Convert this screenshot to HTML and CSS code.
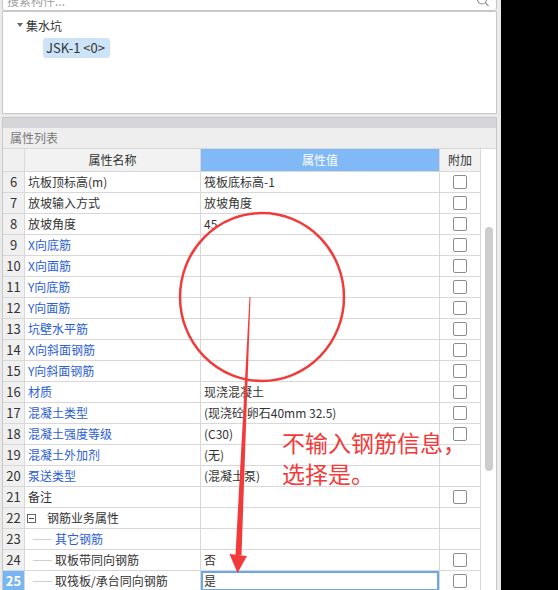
FILE: index.html
```html
<!DOCTYPE html>
<html lang="zh-CN">
<head>
<meta charset="utf-8">
<title>属性列表</title>
<link rel="stylesheet" href="styles.css">
</head>
<body>
<div class="app">
  <div class="search-clip">
    <div class="search">
      <span class="ph">搜索构件...</span>
      <svg class="mag" width="14" height="14" viewBox="0 0 14 14"><circle cx="6" cy="6.5" r="4.5" fill="none" stroke="#9a9a9a" stroke-width="1.2"/><line x1="9.3" y1="9.8" x2="12.5" y2="13" stroke="#9a9a9a" stroke-width="1.3"/></svg>
    </div>
  </div>
  <div class="tree">
    <div class="node"><span class="caret"></span>集水坑</div>
    <div class="leaf"><span class="chip">JSK-1 &lt;0&gt;</span></div>
  </div>
  <div class="props">
    <div class="bar"></div>
    <div class="title">属性列表</div>
    <div class="grid-wrap">
      <div class="grid">
        <div class="c h num"></div><div class="c h">属性名称</div><div class="c h hv">属性值</div><div class="c h">附加</div>

        <div class="c num">6</div><div class="c name">坑板顶标高(m)</div><div class="c val">筏板底标高-1</div><div class="c add"><span class="cb"></span></div>
        <div class="c num">7</div><div class="c name">放坡输入方式</div><div class="c val">放坡角度</div><div class="c add"><span class="cb"></span></div>
        <div class="c num">8</div><div class="c name">放坡角度</div><div class="c val">45</div><div class="c add"><span class="cb"></span></div>
        <div class="c num">9</div><div class="c name blue">X向底筋</div><div class="c val"></div><div class="c add"><span class="cb"></span></div>
        <div class="c num">10</div><div class="c name blue">X向面筋</div><div class="c val"></div><div class="c add"><span class="cb"></span></div>
        <div class="c num">11</div><div class="c name blue">Y向底筋</div><div class="c val"></div><div class="c add"><span class="cb"></span></div>
        <div class="c num">12</div><div class="c name blue">Y向面筋</div><div class="c val"></div><div class="c add"><span class="cb"></span></div>
        <div class="c num">13</div><div class="c name blue">坑壁水平筋</div><div class="c val"></div><div class="c add"><span class="cb"></span></div>
        <div class="c num">14</div><div class="c name blue">X向斜面钢筋</div><div class="c val"></div><div class="c add"><span class="cb"></span></div>
        <div class="c num">15</div><div class="c name blue">Y向斜面钢筋</div><div class="c val"></div><div class="c add"><span class="cb"></span></div>
        <div class="c num">16</div><div class="c name blue">材质</div><div class="c val">现浇混凝土</div><div class="c add"><span class="cb"></span></div>
        <div class="c num">17</div><div class="c name blue">混凝土类型</div><div class="c val">(现浇砼 卵石40mm 32.5)</div><div class="c add"><span class="cb"></span></div>
        <div class="c num">18</div><div class="c name blue">混凝土强度等级</div><div class="c val">(C30)</div><div class="c add"><span class="cb"></span></div>
        <div class="c num">19</div><div class="c name blue">混凝土外加剂</div><div class="c val">(无)</div><div class="c add"></div>
        <div class="c num">20</div><div class="c name blue">泵送类型</div><div class="c val">(混凝土泵)</div><div class="c add"></div>
        <div class="c num">21</div><div class="c name">备注</div><div class="c val"></div><div class="c add"><span class="cb"></span></div>
        <div class="c num">22</div><div class="c name grp"><span class="tog"></span>钢筋业务属性</div><div class="c val"></div><div class="c add"></div>
        <div class="c num">23</div><div class="c name sub blue"><span class="branch"></span>其它钢筋</div><div class="c val"></div><div class="c add"></div>
        <div class="c num">24</div><div class="c name sub"><span class="branch"></span>取板带同向钢筋</div><div class="c val">否</div><div class="c add"><span class="cb"></span></div>
        <div class="c num selnum">25</div><div class="c name sub"><span class="branch"></span>取筏板/承台同向钢筋</div><div class="c val selval">是</div><div class="c add"><span class="cb"></span></div>
      </div>
      <div class="vscroll"><div class="thumb"></div></div>
    </div>
  </div>
  <svg class="annot" width="501" height="590" viewBox="0 0 501 590">
    <ellipse cx="262" cy="297" rx="82" ry="84" fill="none" stroke="#f23a3a" stroke-width="2.5"/>
    <polygon points="249.5,297 250.5,297 241.5,555 235.5,555" fill="#f23a3a"/>
    <polygon points="229.5,554 247,556 237.5,573" fill="#f23a3a"/>
  </svg>
  <div class="note">不输入钢筋信息，<br>选择是。</div>
</div>
</body>
</html>
```

FILE: styles.css
```css
* { box-sizing: border-box; }
html, body { margin: 0; padding: 0; }
body {
  width: 558px;
  height: 590px;
  background: #000;
  overflow: hidden;
  font-family: "Noto Sans CJK SC", "Noto Sans", sans-serif;
  font-size: 12px;
  color: #333;
}
.app {
  position: relative;
  width: 501px;
  height: 590px;
  background: #eaeaea;
  overflow: hidden;
}
.search-clip {
  height: 11px;
  display: flex;
  align-items: flex-end;
  overflow: hidden;
  padding-left: 2px;
}
.search {
  flex: none;
  width: 495px;
  height: 22px;
  background: #fff;
  border: 1px solid #c8c8c8;
  border-radius: 3px;
  display: flex;
  align-items: center;
  justify-content: space-between;
  padding: 0 6px 0 4px;
  color: #a0a0a0;
}
.mag { display: block; }
.tree {
  margin-left: 2px;
  width: 495px;
  height: 103px;
  background: #fff;
  border: 1px solid #c8c8c8;
  padding: 2px 0 0 14px;
}
.node {
  height: 22px;
  display: flex;
  align-items: center;
  color: #333;
}
.caret {
  width: 0;
  height: 0;
  border-left: 3px solid transparent;
  border-right: 3px solid transparent;
  border-top: 4px solid #666;
  margin-right: 3px;
}
.leaf {
  margin-top: 2px;
  padding-left: 26px;
}
.chip {
  display: inline-block;
  height: 20px;
  line-height: 20px;
  padding: 0 5px 0 3px;
  background: #cde4f8;
  border-radius: 3px;
  font-size: 13px;
  color: #333;
}
.props {
  margin: 3px 0 0 2px;
  width: 495px;
  border: 1px solid #c8c8c8;
  border-bottom: none;
  background: #fff;
}
.bar {
  height: 10px;
  background: #d6d6da;
}
.title {
  height: 21px;
  line-height: 20px;
  background: #eeeeee;
  border-bottom: 1px solid #d8d8d8;
  padding-left: 7px;
  color: #7a7a7a;
}
.grid-wrap { display: flex; }
.grid {
  display: grid;
  grid-template-columns: 22px 176px 239px 41px;
  grid-auto-rows: 21px;
}
.c {
  height: 21px;
  border-right: 1px solid #d8d8d8;
  border-bottom: 1px solid #d8d8d8;
  line-height: 20px;
  white-space: nowrap;
  overflow: hidden;
  background: #fff;
}
.grid > .h:nth-child(-n+4) { height: 23px; line-height: 22px; }
.grid { grid-template-rows: 23px; }
.h {
  text-align: center;
  background: #f2f2f2;
  color: #333;
}
.hv { background: #80b9f6; color: #fff; }
.num {
  background: #f0f0f0;
  text-align: center;
  font-size: 13px;
  color: #333;
}
.name { padding-left: 3px; }
.val { padding-left: 3px; }
.blue { color: #2b5dd6; }
.add {
  display: flex;
  align-items: center;
  justify-content: center;
}
.cb {
  width: 14px;
  height: 14px;
  border: 1px solid #8c8c8c;
  border-radius: 2px;
  background: #fff;
}
.grp {
  display: flex;
  align-items: center;
  padding-left: 2px;
}
.tog {
  width: 9px;
  height: 9px;
  border: 1px solid #666;
  margin-right: 11px;
  display: flex;
  align-items: center;
  justify-content: center;
}
.tog::before {
  content: "";
  width: 5px;
  height: 1px;
  background: #444;
}
.sub {
  display: flex;
  align-items: center;
  padding-left: 8px;
}
.branch {
  width: 19px;
  height: 1px;
  background: #cfcfcf;
  margin-right: 3px;
}
.selnum {
  background: #78b5f3;
  color: #fff;
  font-weight: bold;
}
.selval { box-shadow: inset 0 0 0 2px #6ba8ea; }
.vscroll {
  width: 15px;
  padding: 78px 0 0 4px;
}
.thumb {
  width: 8px;
  height: 244px;
  background: #cdcdcd;
  border-radius: 4px;
}
.annot {
  position: absolute;
  left: 0;
  top: 0;
  pointer-events: none;
}
.note {
  position: absolute;
  left: 282px;
  top: 427px;
  font-size: 23px;
  line-height: 31px;
  color: #f23a3a;
  white-space: nowrap;
  pointer-events: none;
}
```
